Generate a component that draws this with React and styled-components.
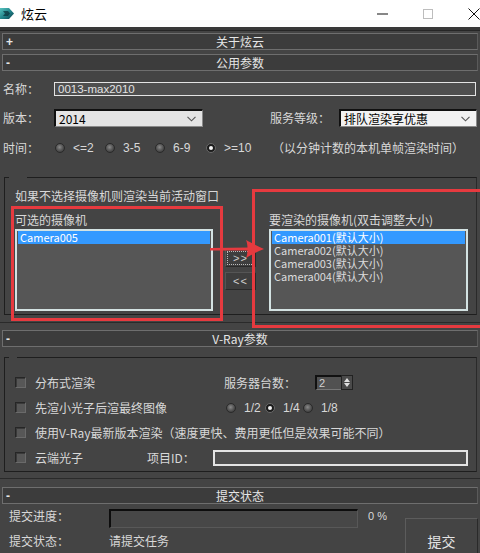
import React from "react";
import styled, { createGlobalStyle } from "styled-components";

const GlobalStyle = createGlobalStyle`
  html, body {
    margin: 0;
    padding: 0;
    background: #444444;
  }
  body {
    font-family: "Noto Sans CJK SC", "Liberation Sans", sans-serif;
    font-size: 12px;
    color: #d8d8d8;
  }
  * { box-sizing: border-box; }
`;

const Window = styled.div`
  width: 480px;
  height: 553px;
  overflow: hidden;
  background: #444444;
`;

const TitleBar = styled.div`
  height: 27px;
  background: #ffffff;
  display: flex;
  align-items: center;
  overflow: hidden;
  color: #000;
`;

const Title = styled.span`
  margin-left: 6px;
  font-size: 13px;
  line-height: 16px;
`;

const Controls = styled.div`
  margin-left: auto;
  margin-right: -17px;
  display: flex;
`;

const ControlBtn = styled.div`
  width: 46px;
  height: 27px;
  display: flex;
  align-items: center;
  justify-content: center;
`;

const Strip = styled.div`
  height: 4px;
  background: #3a3a3a;
  border-bottom: 1px solid #262626;
`;

const RollHeader = styled.div`
  margin: ${(p) => p.$top}px 2px 0 2px;
  height: 17px;
  border: 1px solid #6e6e6e;
  border-right-color: #5a5a5a;
  background: #3c3c3c;
  display: grid;
  grid-template-columns: 16px 1fr 16px;
  align-items: center;
  color: #e6e6e6;
  line-height: 14px;
`;

const Sign = styled.span`
  padding-left: 3px;
  font-size: 12px;
  font-weight: bold;
  font-family: "Liberation Sans", sans-serif;
`;

const HeaderTitle = styled.span`
  text-align: center;
`;

const RollBody = styled.div`
  padding-bottom: ${(p) => p.$bottom || 0}px;
  border-bottom: 1px solid #2a2a2a;
`;

const Row = styled.div`
  display: flex;
  align-items: ${(p) => p.$align || "center"};
  height: ${(p) => p.$h}px;
  margin-top: ${(p) => p.$top || 0}px;
`;

const Label = styled.span`
  flex: none;
  width: ${(p) => (p.$w ? `${p.$w}px` : "auto")};
  padding-left: ${(p) => p.$pad || 0}px;
  line-height: 14px;
  white-space: nowrap;
`;

const TextInput = styled.div`
  width: ${(p) => p.$w}px;
  height: ${(p) => p.$h || 14}px;
  border: ${(p) => (p.$thick ? 2 : 1)}px solid #e4e4e4;
  background: #4f4f4f;
  color: #e2e2e2;
  font-size: 11.5px;
  line-height: 12px;
  padding-left: 3px;
  font-family: "Liberation Sans", sans-serif;
`;

const Select = styled.div`
  width: ${(p) => p.$w}px;
  height: 18px;
  background: ${(p) => p.$bg};
  border-top: 2px solid #101010;
  border-left: 2px solid #101010;
  border-right: 1px solid #8a8a8a;
  border-bottom: 1px solid #8a8a8a;
  color: #000;
  display: flex;
  align-items: center;
  padding: 0 6px 0 3px;
  font-size: 12px;
  line-height: 14px;
`;

const Chevron = () => (
  <svg width="9" height="6" viewBox="0 0 9 6" style={{ marginLeft: "auto" }}>
    <path d="M0.5 0.8 L4.5 4.8 L8.5 0.8" fill="none" stroke="#555" strokeWidth="1.1" />
  </svg>
);

const RadioItem = styled.span`
  flex: none;
  width: ${(p) => (p.$w ? `${p.$w}px` : "auto")};
  display: flex;
  align-items: center;
  gap: 8px;
  line-height: 14px;
  font-family: "Liberation Sans", sans-serif;
`;

const RadioDot = styled.span`
  flex: none;
  display: block;
  width: 10px;
  height: 10px;
  border-radius: 50%;
  border: 1px solid #2a2a2a;
  background: radial-gradient(circle at 45% 40%, #8a8a8a 0%, #5a5a5a 45%, #2c2c2c 100%);
  position: relative;
  &::after {
    content: "";
    display: ${(p) => (p.$on ? "block" : "none")};
    position: absolute;
    left: 2px;
    top: 2px;
    width: 4px;
    height: 4px;
    border-radius: 50%;
    background: #f4f4f4;
  }
  ${(p) => (p.$on ? "background: #1c1c1c; border-color: #6a6a6a;" : "")}
`;

const GroupBox = styled.div`
  position: relative;
  margin: ${(p) => p.$top}px 3px 0 4px;
  height: ${(p) => p.$h}px;
  border: 1px solid #1e1e1e;
  border-right-color: #2a2a2a;
  padding: ${(p) => p.$pt}px 9px 0 10px;
  &::before {
    content: "";
    position: absolute;
    left: 4px;
    top: -1px;
    width: ${(p) => p.$notch}px;
    height: 1px;
    background: #444444;
  }
`;

const Hint = styled.div`
  line-height: 14px;
`;

const Columns = styled.div`
  display: flex;
  margin-top: 10px;
`;

const Column = styled.div`
  flex: none;
  width: ${(p) => p.$w}px;
  display: flex;
  flex-direction: column;
  gap: 2px;
`;

const ColLabel = styled.span`
  line-height: 14px;
  white-space: nowrap;
`;

const ListBox = styled.div`
  height: 82px;
  border: 2px solid #d3e2e2;
  background: #565656;
  padding: 0 1px;
`;

const ListItem = styled.div`
  height: 13px;
  line-height: 13px;
  font-size: 11px;
  padding-left: 2px;
  white-space: nowrap;
  color: ${(p) => (p.$sel ? "#ffffff" : "#dcdcdc")};
  background: ${(p) => (p.$sel ? "#3399ff" : "transparent")};
`;

const MoveButtons = styled.div`
  flex: none;
  width: 56px;
  padding: 36px 0 0 12px;
  display: flex;
  flex-direction: column;
  gap: 5px;
`;

const MoveBtn = styled.div`
  width: 31px;
  height: 18px;
  background: #3e3e3e;
  border: 1px solid #2a2a2a;
  border-top-color: #555;
  border-left-color: #555;
  color: #cfcfcf;
  font-family: "Liberation Sans", sans-serif;
  font-size: 11px;
  display: flex;
  align-items: center;
  justify-content: center;
  letter-spacing: 1px;
  outline: ${(p) => (p.$focus ? "1px dotted #bbb" : "none")};
  outline-offset: -3px;
`;

const Mark = styled.div`
  position: absolute;
  left: ${(p) => p.$x}px;
  top: ${(p) => p.$y}px;
  width: ${(p) => p.$w}px;
  height: ${(p) => p.$h}px;
  border: 3px solid #e63a3f;
  pointer-events: none;
`;

const ArrowMark = styled.svg`
  position: absolute;
  left: 205px;
  top: 60px;
`;

const OptionGrid = styled.div`
  display: grid;
  grid-auto-rows: 25px;
  align-items: center;
`;

const OptionRow = styled.div`
  display: flex;
  align-items: center;
`;

const CheckCell = styled.span`
  flex: none;
  width: ${(p) => p.$w}px;
  display: flex;
  align-items: center;
  gap: 9px;
  line-height: 14px;
  white-space: nowrap;
`;

const CheckBox = styled.span`
  flex: none;
  width: 11px;
  height: 11px;
  border: 1px solid #262626;
  border-right-color: #6a6a6a;
  border-bottom-color: #6a6a6a;
  background: #575757;
  box-shadow: inset 1px 1px 0 #3a3a3a;
`;

const Spin = styled.div`
  display: flex;
  width: 38px;
  height: 15px;
`;

const SpinValue = styled.div`
  width: 26px;
  border-top: 2px solid #111;
  border-left: 2px solid #111;
  border-bottom: 1px solid #777;
  background: #515151;
  color: #d0d0d0;
  font-family: "Liberation Sans", sans-serif;
  font-size: 11px;
  line-height: 12px;
  padding-left: 2px;
`;

const SpinArrows = styled.div`
  width: 12px;
  background: #4a4a4a;
  border: 1px solid #222;
  display: flex;
  flex-direction: column;
  align-items: center;
  justify-content: space-evenly;
`;

const ProgressBar = styled.div`
  flex: none;
  width: 249px;
  height: 19px;
  border-top: 2px solid #0d0d0d;
  border-left: 2px solid #0d0d0d;
  border-right: 1px solid #585858;
  border-bottom: 1px solid #585858;
  background: #474747;
`;

const Percent = styled.span`
  margin-left: 10px;
  line-height: 14px;
  font-family: "Liberation Sans", sans-serif;
  font-size: 11px;
`;

const SubmitArea = styled.div`
  display: flex;
`;

const SubmitFields = styled.div`
  width: 400px;
`;

const SubmitButton = styled.div`
  margin: 14px 0 0 5px;
  width: 73px;
  height: 46px;
  border: 1px solid #2a2a2a;
  border-top-color: #5c5c5c;
  border-left-color: #5c5c5c;
  background: #444444;
  display: flex;
  align-items: center;
  justify-content: center;
  font-size: 14px;
  color: #e4e4e4;
`;

const AppIcon = () => (
  <svg width="15" height="15" viewBox="0 0 15 15">
    <defs>
      <linearGradient id="ic" x1="0" y1="0" x2="1" y2="1">
        <stop offset="0" stopColor="#58c4c0" />
        <stop offset="0.55" stopColor="#1f7f86" />
        <stop offset="1" stopColor="#0d3c48" />
      </linearGradient>
    </defs>
    <path d="M0 2 L9 2 L14 7.5 L9 13 L0 13 Z" fill="url(#ic)" />
    <path d="M3 5 L8 5 L10 7.5 L8 10 L3 10 L5 7.5 Z" fill="#0b2f38" opacity="0.7" />
  </svg>
);

const Radio = ({ on, w, children }) => (
  <RadioItem $w={w}>
    <RadioDot $on={on} />
    {children}
  </RadioItem>
);

export default function App() {
  return (
    <Window>
      <GlobalStyle />
      <TitleBar>
        <AppIcon />
        <Title>炫云</Title>
        <Controls>
          <ControlBtn>
            <svg width="11" height="2"><rect width="11" height="1" y="0.5" fill="#111" /></svg>
          </ControlBtn>
          <ControlBtn>
            <svg width="10" height="10"><rect x="0.5" y="0.5" width="9" height="9" fill="none" stroke="#bdbdbd" /></svg>
          </ControlBtn>
          <ControlBtn>
            <svg width="12" height="12"><path d="M0.5 0.5 L11.5 11.5 M11.5 0.5 L0.5 11.5" stroke="#111" strokeWidth="1" /></svg>
          </ControlBtn>
        </Controls>
      </TitleBar>
      <Strip />

      <RollHeader $top={2}>
        <Sign>+</Sign>
        <HeaderTitle>关于炫云</HeaderTitle>
      </RollHeader>

      <RollHeader $top={4}>
        <Sign>-</Sign>
        <HeaderTitle>公用参数</HeaderTitle>
      </RollHeader>

      <RollBody $bottom={7}>
        <Row $h={14} $top={11}>
          <Label $w={54} $pad={3}>名称：</Label>
          <TextInput $w={422}>0013-max2010</TextInput>
        </Row>

        <Row $h={18} $top={13}>
          <Label $w={54} $pad={3}>版本：</Label>
          <Select $w={149} $bg="#e4e4e4">
            2014
            <Chevron />
          </Select>
          <Label $w={67} />
          <Label $w={69}>服务等级：</Label>
          <Select $w={138} $bg="#f2f2f2">
            排队渲染享优惠
            <Chevron />
          </Select>
        </Row>

        <Row $h={14} $top={14}>
          <Label $w={55} $pad={3}>时间：</Label>
          <Radio w={50}>{"<=2"}</Radio>
          <Radio w={50}>3-5</Radio>
          <Radio w={51}>6-9</Radio>
          <Radio w={66} on>{">=10"}</Radio>
          <Label>（以分钟计数的本机单帧渲染时间）</Label>
        </Row>

        <GroupBox $top={22} $h={138} $pt={11} $notch={18}>
          <Hint>如果不选择摄像机则渲染当前活动窗口</Hint>
          <Columns>
            <Column $w={198}>
              <ColLabel>可选的摄像机</ColLabel>
              <ListBox>
                <ListItem $sel>Camera005</ListItem>
              </ListBox>
            </Column>
            <MoveButtons>
              <MoveBtn $focus>&gt;&gt;</MoveBtn>
              <MoveBtn>&lt;&lt;</MoveBtn>
            </MoveButtons>
            <Column $w={199}>
              <ColLabel>要渲染的摄像机(双击调整大小)</ColLabel>
              <ListBox>
                <ListItem $sel>Camera001(默认大小)</ListItem>
                <ListItem>Camera002(默认大小)</ListItem>
                <ListItem>Camera003(默认大小)</ListItem>
                <ListItem>Camera004(默认大小)</ListItem>
              </ListBox>
            </Column>
          </Columns>

          <Mark $x={6} $y={28} $w={212} $h={115} />
          <Mark $x={247} $y={11} $w={240} $h={139} />
          <ArrowMark width="56" height="22" viewBox="0 0 56 22">
            <path d="M0 10 L40 9.5 L40 12.5 L0 12.5 Z" fill="#e63a3f" />
            <path d="M36 2 C41 5 48 8 54 11 C48 13 41 17 36 20 C38 16 38 6 36 2 Z" fill="#e63a3f" />
          </ArrowMark>
        </GroupBox>
      </RollBody>

      <RollHeader $top={7}>
        <Sign>-</Sign>
        <HeaderTitle>V-Ray参数</HeaderTitle>
      </RollHeader>

      <RollBody $bottom={6}>
        <GroupBox $top={10} $h={115} $pt={12} $notch={8}>
          <OptionGrid>
            <OptionRow>
              <CheckCell $w={209}>
                <CheckBox />
                分布式渲染
              </CheckCell>
              <Label $w={91}>服务器台数：</Label>
              <Spin>
                <SpinValue>2</SpinValue>
                <SpinArrows>
                  <svg width="6" height="4"><path d="M0 4 L3 0 L6 4 Z" fill="#e0e0e0" /></svg>
                  <svg width="6" height="4"><path d="M0 0 L3 4 L6 0 Z" fill="#e0e0e0" /></svg>
                </SpinArrows>
              </Spin>
            </OptionRow>
            <OptionRow>
              <CheckCell $w={211}>
                <CheckBox />
                先渲小光子后渲最终图像
              </CheckCell>
              <Radio w={39}>1/2</Radio>
              <Radio w={38} on>1/4</Radio>
              <Radio>1/8</Radio>
            </OptionRow>
            <OptionRow>
              <CheckCell $w={440}>
                <CheckBox />
                使用V-Ray最新版本渲染（速度更快、费用更低但是效果可能不同）
              </CheckCell>
            </OptionRow>
            <OptionRow>
              <CheckCell $w={132}>
                <CheckBox />
                云端光子
              </CheckCell>
              <Label $w={66}>项目ID：</Label>
              <TextInput $w={255} $h={16} $thick />
            </OptionRow>
          </OptionGrid>
        </GroupBox>
      </RollBody>

      <RollHeader $top={8}>
        <Sign>-</Sign>
        <HeaderTitle>提交状态</HeaderTitle>
      </RollHeader>

      <SubmitArea>
        <SubmitFields>
          <Row $h={19} $top={5} $align="flex-start">
            <Label $w={109} $pad={9}>提交进度：</Label>
            <ProgressBar />
            <Percent>0 %</Percent>
          </Row>
          <Row $h={14} $top={6}>
            <Label $w={109} $pad={9}>提交状态：</Label>
            <Label>请提交任务</Label>
          </Row>
        </SubmitFields>
        <SubmitButton>提交</SubmitButton>
      </SubmitArea>
    </Window>
  );
}
